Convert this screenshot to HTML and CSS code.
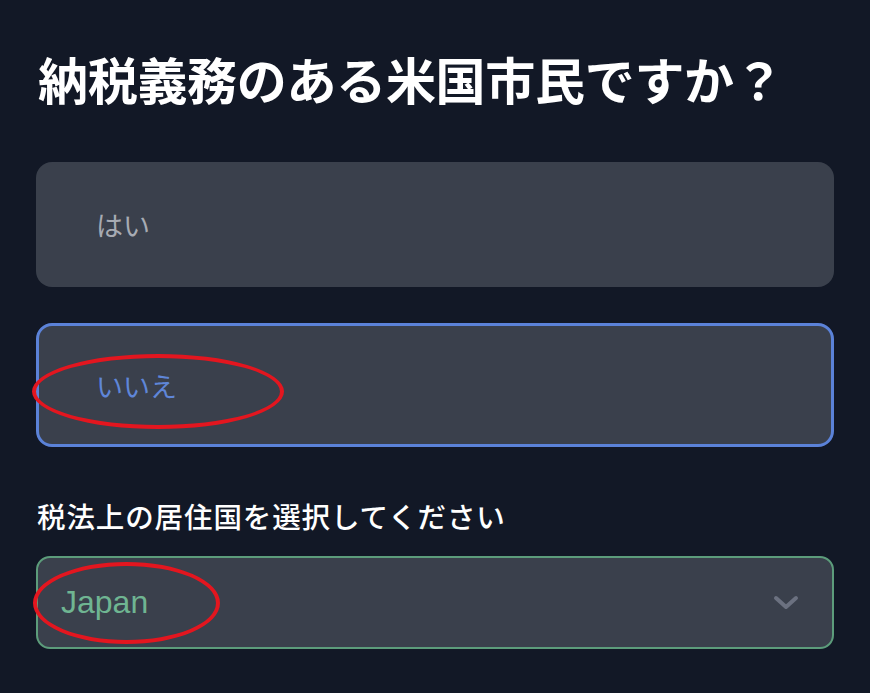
FILE: index.html
```html
<!DOCTYPE html>
<html lang="ja">
<head>
<meta charset="utf-8">
<link rel="stylesheet" href="styles.css">
</head>
<body>
<main class="page">
  <h1 class="title">納税義務のある米国市民ですか？</h1>
  <div class="options">
    <div class="option">はい</div>
    <div class="option selected">
      <span class="annot-wrap"><span class="annot annot-1"></span>いいえ</span>
    </div>
  </div>
  <label class="field-label">税法上の居住国を選択してください</label>
  <div class="select">
    <span class="annot-wrap"><span class="annot annot-2"></span><span class="select-value">Japan</span></span>
    <svg class="chevron" width="26" height="16" viewBox="0 0 26 16"><path d="M3 3 L13 12 L23 3" fill="none" stroke="#6b7180" stroke-width="4" stroke-linecap="round" stroke-linejoin="round"/></svg>
  </div>
</main>
</body>
</html>
```
FILE: styles.css
```css
html, body {
  margin: 0;
  padding: 0;
  background: #121826;
}
body {
  font-family: "Noto Sans CJK JP", "Noto Sans", sans-serif;
  color: #ffffff;
}
.page {
  padding: 46px 36px 0 36px;
  display: flex;
  flex-direction: column;
}
.title {
  margin: 0 0 0 2px;
  font-size: 50px;
  font-weight: 700;
  letter-spacing: -0.3px;
  line-height: 64px;
  white-space: nowrap;
}
.options {
  margin-top: 52px;
  display: flex;
  flex-direction: column;
  gap: 36px;
}
.option {
  box-sizing: border-box;
  height: 125px;
  background: #3a404c;
  border-radius: 16px;
  padding-left: 60px;
  display: flex;
  align-items: center;
  font-size: 27px;
  color: #a7abb3;
  font-weight: 400;
}
.option.selected {
  height: 124px;
  border: 3px solid #5b82d8;
  padding-left: 57px;
  color: #5f86d8;
}
.annot-wrap {
  position: relative;
  display: inline-block;
}
.annot {
  position: absolute;
  box-sizing: border-box;
  border: 4px solid #e3161f;
  border-radius: 50%;
  pointer-events: none;
}
.annot-1 {
  left: -64px;
  top: -12px;
  width: 252px;
  height: 75px;
}
.field-label {
  margin-top: 51px;
  margin-left: 1px;
  font-size: 28.5px;
  font-weight: 500;
  letter-spacing: 0.9px;
  line-height: 36px;
}
.select {
  margin-top: 22px;
  box-sizing: border-box;
  height: 93px;
  border: 2px solid #5c9c7b;
  border-radius: 14px;
  background: #3a404c;
  display: flex;
  align-items: center;
  justify-content: space-between;
  padding: 0 33px 0 23px;
}
.select-value {
  font-family: "Liberation Sans", Arial, sans-serif;
  font-size: 32px;
  color: #6fb592;
}
.annot-2 {
  left: -28px;
  top: -22px;
  width: 187px;
  height: 82px;
}
.chevron {
  display: block;
}
```
